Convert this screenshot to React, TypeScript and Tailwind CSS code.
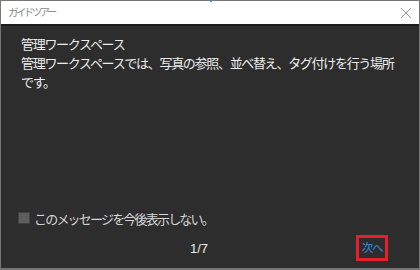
import React from "react";

const jp = { fontFamily: '"Noto Sans CJK JP", "Noto Sans", sans-serif' };

export default function App() {
  return (
    <div className="relative w-[420px] h-[270px] flex flex-col border-t border-l border-r border-b-2 border-[#767676] bg-[#2d2d2d]">
      <span className="absolute left-[209px] top-[-1px] w-[2px] h-[2px] bg-[#3a8ee6]" />
      <div className="h-[23px] bg-white flex items-center justify-between pl-[7px] pr-[6px]">
        <span className="text-[10.5px] leading-none text-[#8a8a8a] tracking-[-2.6px]" style={jp}>
          ガイドツアー
        </span>
        <svg width="12" height="12" viewBox="0 0 12 12" className="mr-[1px]">
          <path d="M1 1 L11 11 M11 1 L1 11" stroke="#9a9a9a" strokeWidth="1" fill="none" />
        </svg>
      </div>
      <div className="h-[2px] bg-[#1c1c1c]" />
      <div className="flex-1 flex flex-col bg-[#2d2d2d]">
        <div
          className="pt-[8px] pl-[20px] w-[400px] text-[13px] leading-[19px] text-[#ececec] tracking-[-1.3px]"
          style={jp}
        >
          <div>管理ワークスペース</div>
          <div>管理ワークスペースでは、写真の参照、並べ替え、タグ付けを行う場所です。</div>
        </div>
        <div className="flex-1" />
        <div className="h-[20px] flex items-center pl-[17px] gap-[4px]">
          <span className="w-[12px] h-[12px] bg-[#5e5e5e] border border-[#404040] box-border" />
          <span className="text-[13px] leading-none text-[#d6d6d6] tracking-[-1.8px]" style={jp}>
            このメッセージを今後表示しない。
          </span>
        </div>
        <div className="mt-[7px] mb-[7px] h-[26px] flex items-center pl-[189px] pr-[31px]">
          <span
            className="text-[13px] leading-none text-[#ececec]"
            style={{ fontFamily: '"Liberation Sans", Arial, sans-serif' }}
          >
            1/7
          </span>
          <div className="ml-auto w-[32px] h-[26px] border-[3px] border-[#e5202a] flex items-center justify-center">
            <span className="text-[11.5px] leading-none text-[#3a8be0] tracking-[-1.2px]" style={jp}>
              次へ
            </span>
          </div>
        </div>
      </div>
    </div>
  );
}
